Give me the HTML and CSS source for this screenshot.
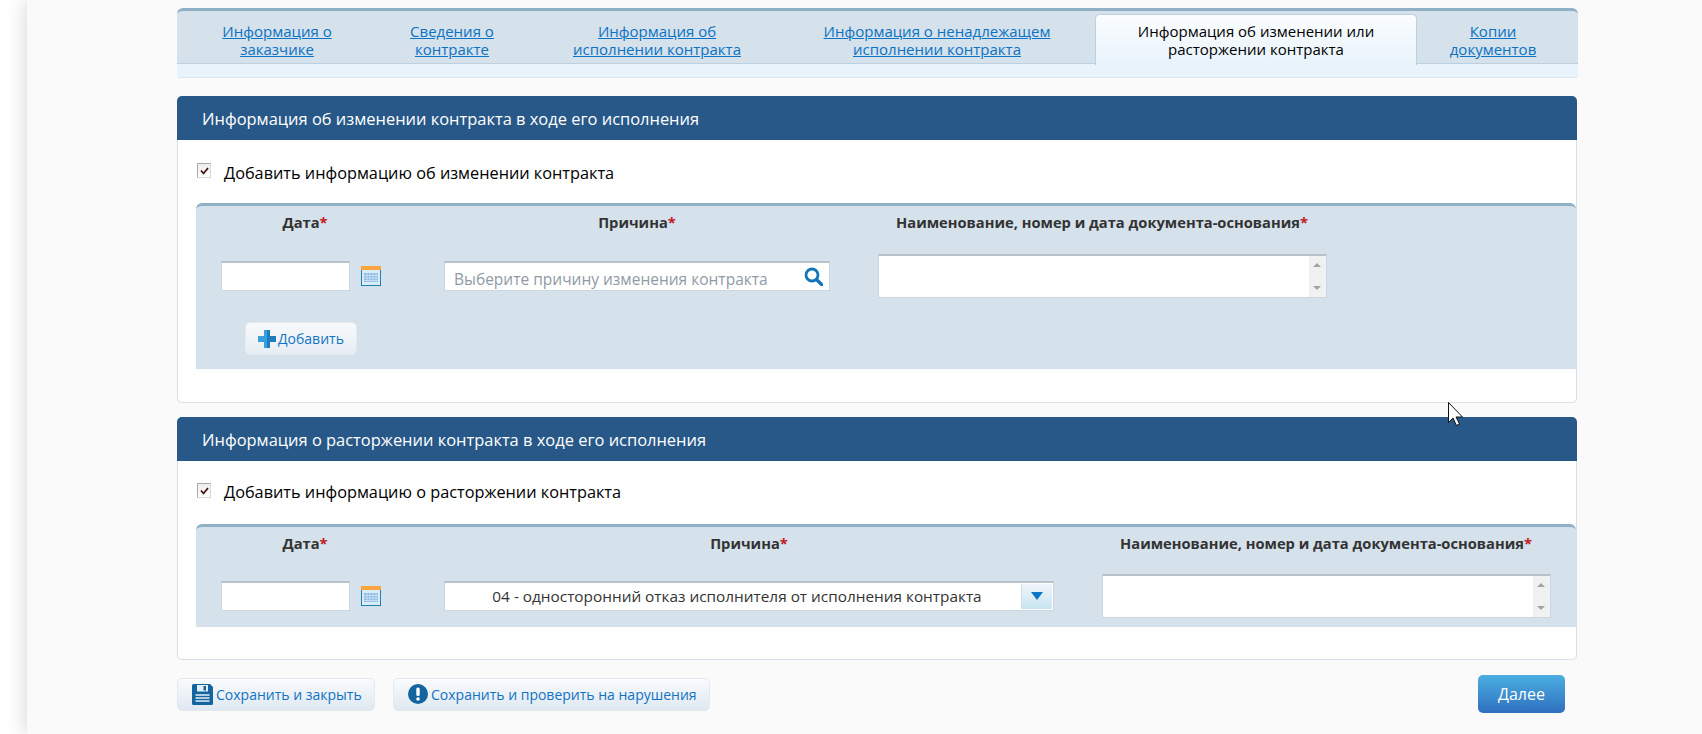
FILE: index.html
```html
<!DOCTYPE html>
<html lang="ru">
<head>
<meta charset="utf-8">
<title>Информация об изменении или расторжении контракта</title>
<link rel="stylesheet" href="styles.css">
</head>
<body>
<main class="page">
  <nav class="tabs">
    <div class="tab-row">
      <div class="tab"><a href="#">Информация о<br>заказчике</a></div>
      <div class="tab"><a href="#">Сведения о<br>контракте</a></div>
      <div class="tab"><a href="#">Информация об<br>исполнении контракта</a></div>
      <div class="tab"><a href="#">Информация о ненадлежащем<br>исполнении контракта</a></div>
      <div class="tab tab-active">Информация об изменении или<br>расторжении контракта</div>
      <div class="tab"><a href="#">Копии<br>документов</a></div>
    </div>
    <div class="tab-strip"></div>
  </nav>

  <section class="panel panel-change">
    <h2 class="panel-title">Информация об изменении контракта в ходе его исполнения</h2>
    <div class="check-row">
      <span class="check"><svg viewBox="0 0 9 8" width="9" height="8"><path d="M1 3.500 3.500 6.500 8 1" fill="none" stroke="#3a1010" stroke-width="1.700"/></svg></span>
      <span class="check-label">Добавить информацию об изменении контракта</span>
    </div>
    <div class="form-box">
      <div class="form-grid grid-change">
        <div class="head">Дата<span class="req">*</span></div>
        <div class="head">Причина<span class="req">*</span></div>
        <div class="head">Наименование, номер и дата документа-основания<span class="req">*</span></div>
        <div></div>
        <div class="cell-date">
          <input class="field date-input" type="text">
          <svg class="cal" viewBox="0 0 20 20" width="20" height="20"><rect width="20" height="20" fill="#1f7fb5"/><rect width="20" height="4" fill="#f7a53c"/><rect x="1" y="4" width="18" height="15" fill="#d9edf8"/><rect x="3" y="7" width="14" height="9" fill="#8db9e6"/><path d="M3 9.500h14M3 12h14M3 14.500h14M6 7v9M9 7v9M12 7v9M15 7v9" stroke="#cfe3f5" stroke-width=".8"/></svg>
        </div>
        <div class="cell-center">
          <div class="field search-field">
            <input class="search-input" type="text" placeholder="Выберите причину изменения контракта">
            <svg class="search-icon" viewBox="0 0 19 19" width="19" height="19"><circle cx="8" cy="8" r="6" fill="none" stroke="#0f74b9" stroke-width="2.800"/><path d="M12.500 12.500 17.500 17.500" stroke="#0f74b9" stroke-width="3.200" stroke-linecap="round"/></svg>
          </div>
        </div>
        <div class="cell-center">
          <div class="field area">
            <div class="scroll"><span class="up"></span><span class="down"></span></div>
          </div>
        </div>
        <div></div>
      </div>
      <div class="add-row">
        <button class="btn add-btn" type="button">
          <svg viewBox="1.500 1.500 15 15" width="18" height="18"><path d="M6.500 1.500h5v5h5v5h-5v5h-5v-5h-5v-5h5z" fill="#35a0dc"/><path d="M9 1.500h2.500v5h5v5h-5v5H9z" fill="#1f7cbd"/></svg>
          Добавить
        </button>
      </div>
    </div>
  </section>

  <section class="panel panel-stop">
    <h2 class="panel-title">Информация о расторжении контракта в ходе его исполнения</h2>
    <div class="check-row check-row-tight">
      <span class="check"><svg viewBox="0 0 9 8" width="9" height="8"><path d="M1 3.500 3.500 6.500 8 1" fill="none" stroke="#3a1010" stroke-width="1.700"/></svg></span>
      <span class="check-label">Добавить информацию о расторжении контракта</span>
    </div>
    <div class="form-box">
      <div class="form-grid grid-stop">
        <div class="head">Дата<span class="req">*</span></div>
        <div class="head">Причина<span class="req">*</span></div>
        <div class="head">Наименование, номер и дата документа-основания<span class="req">*</span></div>
        <div></div>
        <div class="cell-date">
          <input class="field date-input" type="text">
          <svg class="cal" viewBox="0 0 20 20" width="20" height="20"><rect width="20" height="20" fill="#1f7fb5"/><rect width="20" height="4" fill="#f7a53c"/><rect x="1" y="4" width="18" height="15" fill="#d9edf8"/><rect x="3" y="7" width="14" height="9" fill="#8db9e6"/><path d="M3 9.500h14M3 12h14M3 14.500h14M6 7v9M9 7v9M12 7v9M15 7v9" stroke="#cfe3f5" stroke-width=".8"/></svg>
        </div>
        <div class="cell-center">
          <div class="field select">
            <span class="select-text">04 - односторонний отказ исполнителя от исполнения контракта</span>
            <span class="select-btn"><svg viewBox="0 0 12 8" width="12" height="8"><path d="M0 0h12L6 8z" fill="#0b76c5"/></svg></span>
          </div>
        </div>
        <div class="cell-center">
          <div class="field area">
            <div class="scroll"><span class="up"></span><span class="down"></span></div>
          </div>
        </div>
        <div></div>
      </div>
    </div>
  </section>

  <footer class="actions">
    <button class="btn action-btn save-btn" type="button">
      <svg viewBox="0 0 21 21" width="21" height="21"><path d="M1.500 0H18l3 3v16.500a1.500 1.500 0 0 1-1.500 1.500h-18A1.500 1.500 0 0 1 0 19.500v-18A1.500 1.500 0 0 1 1.500 0z" fill="#14659f"/><rect x="5" y="1" width="11" height="6.500" fill="#e4eef6"/><rect x="11.500" y="2" width="2.500" height="4.500" fill="#14659f"/><path d="M3.500 11h14M3.500 14h14M3.500 17h14" stroke="#e4eef6" stroke-width="1.500"/></svg>
      Сохранить и закрыть
    </button>
    <button class="btn action-btn check-btn" type="button">
      <svg viewBox="0 0 20 20" width="20" height="20"><circle cx="10" cy="10" r="10" fill="#14659f"/><rect x="8.300" y="3.500" width="3.400" height="8.500" rx="1.500" fill="#fff"/><circle cx="10" cy="15" r="1.800" fill="#fff"/></svg>
      Сохранить и проверить на нарушения
    </button>
    <button class="next-btn" type="button">Далее</button>
  </footer>
</main>
<svg class="cursor" viewBox="0 0 16 24" width="16" height="24"><path d="M.5.500v20l4.500-4.500 3.500 7.500 3-1.500L8 15h6.500z" fill="#fff" stroke="#111" stroke-width="1"/></svg>
</body>
</html>
```
FILE: styles.css
```css
* { box-sizing: border-box; }
html, body { margin: 0; height: 100%; overflow: hidden; background: #fff; }
body { font-family: "Open Sans", "Liberation Sans", Arial, sans-serif; font-size: 15px; color: #000; position: relative; }

.page {
  margin-left: 27px;
  min-height: 734px;
  padding: 8px 124px 0 150px;
  background: #fafafa;
  box-shadow: 0 0 20px rgba(0, 0, 0, .18);
}

/* Tabs */
.tabs { height: 70px; }
.tab-row {
  height: 56px;
  padding-left: 6px;
  display: grid;
  grid-template-columns: 188px 162px 248px 312px 324px 152px;
  background: #d5e1eb;
  border-top: 3px solid #8fb0c5;
  border-bottom: 1px solid #bdd0df;
  border-radius: 6px 6px 0 0;
}
.tab { padding-top: 11px; text-align: center; line-height: 18px; font-size: 15px; }
.tab a { color: #0b72c4; }
.tab-active {
  margin: 3px 0 -1px 2px;
  padding-top: 7px;
  height: 51px;
  background: linear-gradient(#fbfdff, #e8f3fb);
  border: 1px solid #bdd0df;
  border-bottom: 0;
  border-radius: 5px 5px 0 0;
}
.tab-strip {
  height: 14px;
  background: #e8f3fb;
  border-bottom: 1px solid #dde6ec;
  border-radius: 0 0 3px 3px;
}

/* Panels */
.panel {
  margin-right: 1px;
  background: #fff;
  border: 1px solid #d5e0e9;
  border-top: 0;
  border-radius: 5px;
}
.panel-change { margin-top: 18px; height: 307px; }
.panel-stop { margin-top: 14px; height: 243px; }
.panel-title {
  margin: 0 -1px;
  height: 44px;
  padding-left: 25px;
  background: #285888;
  color: #fff;
  font-size: 16.45px;
  font-weight: 400;
  line-height: 45px;
  border-radius: 5px 5px 0 0;
}
.check-row { height: 63px; padding: 24px 0 0 19px; display: flex; gap: 13px; }
.check-row-tight { padding-top: 22px; }
.check {
  width: 14px;
  height: 15px;
  margin-top: -1px;
  display: flex;
  align-items: center;
  justify-content: center;
  background: linear-gradient(#eee, #fff);
  border: 1px solid #aaa9a9;
  border-right-color: #d8d8d8;
  border-bottom-color: #d8d8d8;
}
.check-row-tight .check { margin-top: 0; }
.check-label { font-size: 16.3px; line-height: 18px; color: #000; }

.form-box {
  margin-left: 18px;
  background: #d5e1eb;
  border-top: 3px solid #8fb0c5;
  border-radius: 6px 6px 0 0;
}
.form-grid { display: grid; }
.grid-change { grid-template-columns: 218px 446px 484px 1fr; grid-template-rows: 37px 66px; }
.grid-stop { grid-template-columns: 218px 670px 484px 1fr; grid-template-rows: 37px 63px; }
.head {
  padding-top: 7px;
  text-align: center;
  font-size: 14.7px;
  font-weight: 700;
  line-height: 18px;
  color: #333;
}
.req { color: #c4161c; }
.cell-date { display: flex; align-items: center; padding-left: 25px; gap: 11px; }
.cell-center { display: flex; align-items: center; justify-content: center; }

.field {
  background: #fff;
  border: 1px solid #ccd6de;
  border-top: 2px solid #b8c1c8;
}
.date-input { width: 129px; height: 30px; padding: 0 6px; font: inherit; outline: 0; }
.cal { flex: none; }

.search-field { width: 386px; height: 30px; display: flex; align-items: center; }
.search-input {
  flex: 1;
  min-width: 0;
  height: 100%;
  padding: 4px 0 0 9px;
  border: 0;
  outline: 0;
  background: transparent;
  font: inherit;
  font-size: 15.5px;
}
.search-input::placeholder { color: #8f9ba5; opacity: 1; }
.search-icon { flex: none; margin: 0 6px 0 0; }

.area { width: 449px; height: 44px; display: flex; justify-content: flex-end; }
.scroll {
  width: 17px;
  display: flex;
  flex-direction: column;
  justify-content: space-between;
  align-items: center;
  padding: 7px 0;
  background: #f1f1f1;
}
.up, .down { width: 0; height: 0; border-left: 4px solid transparent; border-right: 4px solid transparent; }
.up { border-bottom: 4px solid #a3a3a3; }
.down { border-top: 4px solid #a3a3a3; }

.select { width: 610px; height: 30px; display: flex; align-items: stretch; }
.select-text { flex: 1; padding-left: 8px; text-align: center; font-size: 15.35px; line-height: 26px; color: #333; }
.select-btn {
  width: 31px;
  margin: 1px 1px 1px 0;
  display: flex;
  align-items: center;
  justify-content: center;
  background: linear-gradient(#f1f6f9, #c7e4f1);
  border-left: 1px solid #d6dde2;
}

.btn {
  display: inline-flex;
  align-items: center;
  font-family: inherit;
  color: #1173c4;
  border: 1px solid #e3e9ef;
  border-radius: 5px;
  background: linear-gradient(#f9fbfd, #dfe8f1);
  padding: 0;
}
.add-row { padding: 13px 0 14px 49px; }
.add-btn { width: 112px; height: 33px; padding-left: 12px; font-size: 14px; gap: 2px; background: linear-gradient(#f8fafc, #e6edf3); }

.actions { margin-top: 15px; height: 38px; display: flex; align-items: center; }
.action-btn { height: 33px; font-size: 14px; gap: 3px; }
.save-btn { width: 198px; padding-left: 14px; }
.check-btn { width: 317px; margin-left: 18px; padding-left: 14px; }
.next-btn {
  width: 87px;
  height: 38px;
  margin: 0 13px 0 auto;
  border: 0;
  border-radius: 5px;
  background: linear-gradient(#4bafe0, #2f6fc0);
  color: #fff;
  font-family: inherit;
  font-size: 16px;
}

.cursor { position: absolute; left: 1448px; top: 402px; }
```
